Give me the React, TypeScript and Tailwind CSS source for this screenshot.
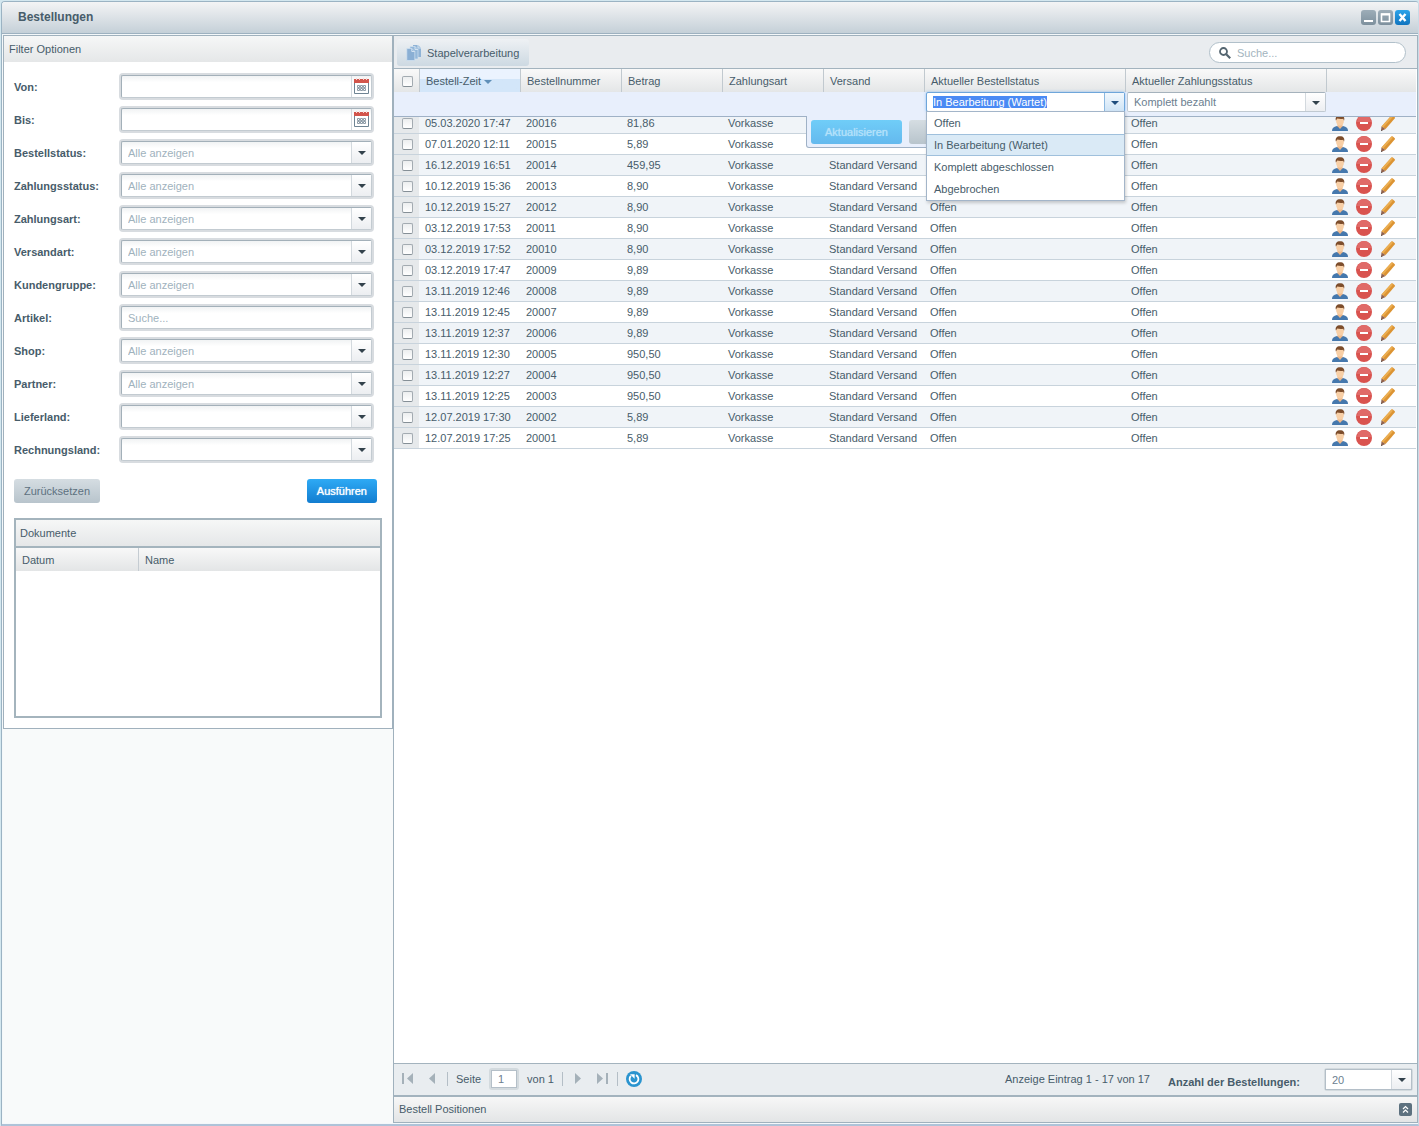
import { useEffect, useRef, type ReactNode } from 'react'
import clsx from 'clsx'

const filters = [
  { id: 'von', label: 'Von:', type: 'date' },
  { id: 'bis', label: 'Bis:', type: 'date' },
  { id: 'bestellstatus', label: 'Bestellstatus:', type: 'combo', value: 'Alle anzeigen' },
  { id: 'zahlungsstatus', label: 'Zahlungsstatus:', type: 'combo', value: 'Alle anzeigen' },
  { id: 'zahlungsart', label: 'Zahlungsart:', type: 'combo', value: 'Alle anzeigen' },
  { id: 'versandart', label: 'Versandart:', type: 'combo', value: 'Alle anzeigen' },
  { id: 'kundengruppe', label: 'Kundengruppe:', type: 'combo', value: 'Alle anzeigen' },
  { id: 'artikel', label: 'Artikel:', type: 'text' },
  { id: 'shop', label: 'Shop:', type: 'combo', value: 'Alle anzeigen' },
  { id: 'partner', label: 'Partner:', type: 'combo', value: 'Alle anzeigen' },
  { id: 'lieferland', label: 'Lieferland:', type: 'combo', value: '' },
  { id: 'rechnungsland', label: 'Rechnungsland:', type: 'combo', value: '' },
]

const orders = [
  { time: '05.03.2020 17:47', number: '20016', amount: '81,86', shipping: '', status: '' },
  { time: '07.01.2020 12:11', number: '20015', amount: '5,89', shipping: '', status: '' },
  { time: '16.12.2019 16:51', number: '20014', amount: '459,95', shipping: 'Standard Versand', status: '' },
  { time: '10.12.2019 15:36', number: '20013', amount: '8,90', shipping: 'Standard Versand', status: '' },
  { time: '10.12.2019 15:27', number: '20012', amount: '8,90', shipping: 'Standard Versand', status: 'Offen' },
  { time: '03.12.2019 17:53', number: '20011', amount: '8,90', shipping: 'Standard Versand', status: 'Offen' },
  { time: '03.12.2019 17:52', number: '20010', amount: '8,90', shipping: 'Standard Versand', status: 'Offen' },
  { time: '03.12.2019 17:47', number: '20009', amount: '9,89', shipping: 'Standard Versand', status: 'Offen' },
  { time: '13.11.2019 12:46', number: '20008', amount: '9,89', shipping: 'Standard Versand', status: 'Offen' },
  { time: '13.11.2019 12:45', number: '20007', amount: '9,89', shipping: 'Standard Versand', status: 'Offen' },
  { time: '13.11.2019 12:37', number: '20006', amount: '9,89', shipping: 'Standard Versand', status: 'Offen' },
  { time: '13.11.2019 12:30', number: '20005', amount: '950,50', shipping: 'Standard Versand', status: 'Offen' },
  { time: '13.11.2019 12:27', number: '20004', amount: '950,50', shipping: 'Standard Versand', status: 'Offen' },
  { time: '13.11.2019 12:25', number: '20003', amount: '950,50', shipping: 'Standard Versand', status: 'Offen' },
  { time: '12.07.2019 17:30', number: '20002', amount: '5,89', shipping: 'Standard Versand', status: 'Offen' },
  { time: '12.07.2019 17:25', number: '20001', amount: '5,89', shipping: 'Standard Versand', status: 'Offen' },
]

const statusOptions = ['Offen', 'In Bearbeitung (Wartet)', 'Komplett abgeschlossen', 'Abgebrochen']

function Arrow({ className }: { className?: string }) {
  return (
    <svg viewBox="0 0 8 4" className={clsx('h-1 w-2 fill-current', className)}>
      <path d="M0 0h8L4 4z" />
    </svg>
  )
}

function CalendarIcon() {
  return (
    <svg viewBox="0 0 15 16" className="h-4 w-[15px]">
      <path d="M.5 3.500h14v12H.5z" fill="#fff" stroke="#6f8493" />
      <path d="M0 1h15v4H0z" fill="#d2554c" />
      <path d="M2 0h1v2H2zM5 0h1v2H5zM9 0h1v2H9zM12 0h1v2h-1z" fill="#f6d9d6" />
      <path
        d="M3.500 7.500h2v2h-2zM6.500 7.500h2v2h-2zM9.500 7.500h2v2h-2zM3.500 10.500h2v2h-2zM6.500 10.500h2v2h-2zM9.500 10.500h2v2h-2z"
        fill="none"
        stroke="#8d9ba6"
      />
    </svg>
  )
}

function UserIcon() {
  return (
    <svg viewBox="0 0 16 16" className="size-4">
      <path d="M0 16c0-3 1.500-4.200 5-5h6c3.500.8 5 2 5 5z" fill="#4578ad" />
      <path d="M5.500 9h5v2.200L8 14l-2.500-2.800z" fill="#eeb98c" />
      <ellipse cx="8" cy="6" rx="3.900" ry="4.800" fill="#f8cfa6" />
      <path d="M3.900 5.600C3 2.200 4.800.2 8 .2c3.400 0 5 2 4.100 5.400-.6-.7-.5-1.300-.8-1.900-2 .4-4.200.3-6-.2-.6.700-.7 1.300-1.400 2.100z" fill="#7d4d2b" />
    </svg>
  )
}

function DeleteIcon() {
  return (
    <svg viewBox="0 0 16 16" className="size-4">
      <circle cx="8" cy="8" r="8" fill="#d9534f" />
      <path d="M1 7a7 7 0 0 1 14 0z" fill="#e06a68" />
      <rect x="4" y="7" width="8" height="2" fill="#fff" />
    </svg>
  )
}

function PencilIcon() {
  return (
    <svg viewBox="0 0 16 16" className="size-4">
      <path d="M11.400.6Q12 0 12.800.5L14.600 2q.7.700.1 1.400L5.600 14 1.500 11.600z" fill="#dc9433" />
      <path d="M11.400.6 13 1.700 3.200 12.600 1.500 11.600z" fill="#ebae52" />
      <path d="M1.500 11.600 5.600 14 1 16z" fill="#93634c" />
      <path d="M1.200 14.400 2.600 15.300 1 16z" fill="#4d4d4d" />
    </svg>
  )
}

function StackIcon() {
  return (
    <svg viewBox="0 0 16 16" className="size-4">
      <path d="M7 0h5l3 3v9H7z" fill="#8fb3d6" />
      <path d="M4 1.500h5l3 3V14H4z" fill="#94b8da" stroke="#d3e3f1" strokeWidth=".7" />
      <path d="M.8 3.500h5l3 3v9h-8z" fill="#8aafd4" stroke="#d3e3f1" strokeWidth=".7" />
      <path d="M5.800 3.500v3h3M9 1.500v3h3M12 0v3h3" fill="none" stroke="#d3e3f1" />
    </svg>
  )
}

function Field({ children }: { children: ReactNode }) {
  return (
    <div className="h-[27px] flex-1 rounded-[4px] bg-[#d8dce0] p-[2px]">
      <div className="flex h-full rounded-[2px] border border-[#c3cbd1] border-t-[#a3b0b9] border-l-[#a3b0b9] bg-white bg-linear-to-b from-[#f1f3f4] from-0% to-white to-30%">
        {children}
      </div>
    </div>
  )
}

function Combo({ id, label, value, muted }: { id: string; label?: string; value: string; muted?: boolean }) {
  return (
    <div className="relative flex min-w-0 flex-1">
      <select
        id={id}
        aria-label={label}
        className={clsx('min-w-0 flex-1 appearance-none bg-transparent pl-[6px] outline-none', muted ? 'text-[#9fb2bd]' : 'text-[#6c8090]')}
      >
        <option>{value}</option>
      </select>
      <span className="pointer-events-none absolute inset-y-0 right-0 flex w-5 items-center justify-center border-l border-[#d3d9de] bg-linear-to-b from-white to-[#eceef1] pt-px">
        <Arrow className="text-[#33424c]" />
      </span>
    </div>
  )
}

function FilterPanel() {
  return (
    <section className="border border-[#a0b1bd] bg-white">
      <h2 className="h-[26px] bg-linear-to-b from-[#f6f7f7] to-[#e5e7e8] px-[5px] leading-[26px]">Filter Optionen</h2>
      <form className="px-[10px] pt-[11px] pb-[10px]">
        <div className="flex flex-col gap-[6px] pr-2">
          {filters.map((f) => (
            <div key={f.id} className="flex items-center">
              <label htmlFor={f.id} className="w-[105px] font-bold">
                {f.label}
              </label>
              <Field>
                {f.type === 'date' && (
                  <>
                    <input id={f.id} className="min-w-0 flex-1 px-[6px] outline-none" />
                    <button type="button" aria-label="Kalender" className="flex w-5 items-start justify-center border-l border-[#d3d9de] pt-[2px]">
                      <CalendarIcon />
                    </button>
                  </>
                )}
                {f.type === 'text' && (
                  <input id={f.id} placeholder="Suche..." className="min-w-0 flex-1 px-[6px] outline-none placeholder:text-[#9fb2bd]" />
                )}
                {f.type === 'combo' && <Combo id={f.id} value={f.value ?? ''} muted />}
              </Field>
            </div>
          ))}
        </div>
        <div className="mt-4 flex justify-between pr-[5px]">
          <button type="reset" className="h-6 rounded-[3px] bg-linear-to-b from-[#d5dde2] to-[#b8c4cc] px-[10px] text-[#5d717f]">
            Zurücksetzen
          </button>
          <button
            type="button"
            className="h-6 rounded-[3px] bg-linear-to-b from-[#2eaaf5] to-[#127dd0] px-[10px] text-white [text-shadow:0_0_1px_#fff]"
          >
            Ausführen
          </button>
        </div>
        <div className="mt-[15px] flex h-[200px] flex-col border-2 border-[#a4b4bd]">
          <h3 className="h-7 border-b-2 border-[#a4b4bd] bg-linear-to-b from-[#f6f7f7] to-[#e5e7e8] pl-1 leading-[26px]">Dokumente</h3>
          <table className="w-full table-fixed border-separate border-spacing-0 text-left">
            <thead>
              <tr className="h-[23px] bg-linear-to-b from-[#f8f8f8] to-[#e3e5e6]">
                <th className="w-[123px] border-r border-[#c5ccd2] pl-[6px] font-normal">Datum</th>
                <th className="pl-[6px] font-normal">Name</th>
              </tr>
            </thead>
          </table>
        </div>
      </form>
    </section>
  )
}

function RowEditor() {
  const input = useRef<HTMLInputElement>(null)

  useEffect(() => {
    input.current?.focus()
    input.current?.select()
  }, [])

  return (
    <div className="absolute inset-x-0 top-0 z-10 flex h-[25px] items-start border-b border-[#9fb1c6] bg-[#e8effc] pl-[532px]">
      {/* save / cancel tab hanging below the edited row */}
      <div className="absolute top-6 left-[412px] flex h-8 w-[198px] gap-[7px] rounded-b-[3px] border border-t-0 border-[#9fb1c6] bg-[#e8effc] px-1 pt-1">
        <button
          disabled
          className="h-6 w-[91px] rounded-[3px] bg-linear-to-b from-[#70cdf8] to-[#64b9ee] text-[#b4e1fa] [text-shadow:0_0_1px_#b4e1fa]"
        >
          Aktualisieren
        </button>
        <button aria-label="Abbrechen" className="h-6 flex-1 rounded-[3px] bg-linear-to-b from-[#d5dde2] to-[#b8c4cc]" />
      </div>

      <div className="relative flex h-5 w-[199px] rounded-[2px] border border-[#6ea6da] bg-white shadow-[0_0_3px_#8ebcf0]">
        <input
          ref={input}
          aria-label="Aktueller Bestellstatus"
          defaultValue="In Bearbeitung (Wartet)"
          className="min-w-0 flex-1 pl-[6px] leading-3 outline-none [text-shadow:0_0_1px_#fff] selection:bg-[#4a8af4] selection:text-white"
        />
        <button aria-label="Auswahl öffnen" className="flex w-5 items-center justify-center border-l border-[#8db9e0] bg-linear-to-b from-[#f2f8fd] to-[#cfe4f6] pt-px">
          <Arrow className="text-[#1f4d7d]" />
        </button>
        <ul role="listbox" className="absolute top-[18px] -right-px -left-px border border-[#a3b5c9] bg-white shadow-[1px_2px_3px_#00000030]">
          {statusOptions.map((option, i) => (
            <li
              key={option}
              role="option"
              aria-selected={i === 1}
              className={clsx('h-[22px] border-y px-[7px] leading-5', i === 1 ? 'border-[#9fc0dc] bg-[#daeaf6]' : 'border-transparent')}
            >
              {option}
            </li>
          ))}
        </ul>
      </div>
      <div className="ml-[2px] flex h-5 w-[199px] rounded-[2px] border border-[#c0c9d1] border-t-[#a5b2bc] bg-white">
        <Combo id="edit-zahlungsstatus" label="Aktueller Zahlungsstatus" value="Komplett bezahlt" />
      </div>
    </div>
  )
}

function Check({ label }: { label: string }) {
  return (
    <input
      type="checkbox"
      aria-label={label}
      className="mt-px ml-2 block size-[11px] appearance-none rounded-[2px] border border-[#a3abb1] border-b-[#858f96] bg-linear-to-b from-[#eceeef] to-white"
    />
  )
}

function OrderGrid() {
  const th = 'border-l border-[#c1c9cf] pl-[6px] font-normal'
  const td = 'border-b border-[#c8d3dc] pb-px pl-[6px]'
  return (
    <table className="w-full table-fixed border-separate border-spacing-0 text-left whitespace-nowrap">
      <colgroup>
        <col className="w-[25px]" />
        <col className="w-[101px]" />
        <col className="w-[101px]" />
        <col className="w-[101px]" />
        <col className="w-[101px]" />
        <col className="w-[101px]" />
        <col className="w-[201px]" />
        <col className="w-[201px]" />
        <col />
      </colgroup>
      <thead>
        <tr className="h-[23px] bg-linear-to-b from-[#f9f9f9] to-[#e4e6e7]">
          <th>
            <Check label="Alle auswählen" />
          </th>
          <th className={clsx(th, 'bg-linear-to-b from-[#ebf3fe] from-45% to-[#d3e6f9] to-45%')}>
            Bestell-Zeit <Arrow className="inline text-[#5f8fb8]" />
          </th>
          <th className={th}>Bestellnummer</th>
          <th className={th}>Betrag</th>
          <th className={th}>Zahlungsart</th>
          <th className={th}>Versand</th>
          <th className={th}>Aktueller Bestellstatus</th>
          <th className={th}>Aktueller Zahlungsstatus</th>
          <th className={th} aria-label="Aktionen" />
        </tr>
      </thead>
      <tbody>
        <tr className="h-[21px]">
          <td colSpan={9} className="relative">
            <RowEditor />
          </td>
        </tr>
        {orders.map((order) => (
          <tr key={order.number} className="h-[21px] odd:bg-white even:bg-[#f0f4f8]">
            <td className="border-b border-[#c8d3dc] bg-[#e6e9eb]">
              <Check label={order.number} />
            </td>
            <td className={td}>{order.time}</td>
            <td className={td}>{order.number}</td>
            <td className={td}>{order.amount}</td>
            <td className={td}>Vorkasse</td>
            <td className={td}>{order.shipping}</td>
            <td className={td}>{order.status}</td>
            <td className={td}>Offen</td>
            <td className="border-b border-[#c8d3dc]">
              <div className="flex h-5 items-center gap-2 pl-[6px]">
                <button aria-label="Kunde öffnen">
                  <UserIcon />
                </button>
                <button aria-label="Löschen">
                  <DeleteIcon />
                </button>
                <button aria-label="Bearbeiten">
                  <PencilIcon />
                </button>
              </div>
            </td>
          </tr>
        ))}
      </tbody>
    </table>
  )
}

function Pager() {
  const icon = 'h-[11px] w-3 fill-[#a5b1b9]'
  const divider = <span className="h-[14px] w-px bg-[#b4bec6]" />
  return (
    <div className="flex h-[34px] items-center border-t border-b-2 border-[#a3b3be] bg-[#e9edf0] pr-1 pl-2">
      <div className="flex items-center pb-[2px]">
        <button aria-label="Erste Seite" className="mr-3">
          <svg viewBox="0 0 12 11" className={icon}>
            <path d="M0 0h2v11H0zM11 0v11L5 5.500z" />
          </svg>
        </button>
        <button aria-label="Vorherige Seite" className="mr-[9px]">
          <svg viewBox="0 0 12 11" className={icon}>
            <path d="M9 0v11L3 5.500z" />
          </svg>
        </button>
        {divider}
        <label htmlFor="page" className="mr-2 ml-2">
          Seite
        </label>
        <div className="h-[22px] w-[30px] rounded-[3px] bg-[#d3dade] p-[2px]">
          <input
            id="page"
            defaultValue="1"
            className="block h-full w-full border border-[#b4bfc8] bg-white pl-[6px] text-[#6c8090] outline-none"
          />
        </div>
        <span className="mr-2 ml-2">von 1</span>
        {divider}
        <button aria-label="Nächste Seite" className="ml-[9px]">
          <svg viewBox="0 0 12 11" className={icon}>
            <path d="M3 0v11l6-5.500z" />
          </svg>
        </button>
        <button aria-label="Letzte Seite" className="mr-[9px] ml-3">
          <svg viewBox="0 0 12 11" className={icon}>
            <path d="M1 0v11l6-5.500zM10 0h2v11h-2z" />
          </svg>
        </button>
        {divider}
        <button aria-label="Aktualisieren" className="ml-2">
          <svg viewBox="0 0 16 16" className="size-4" fill="none">
            <circle cx="8" cy="8" r="8" fill="#2a94cf" />
            <path d="M4.900 4.900A4.400 4.400 0 1 0 10 4.100" stroke="#fff" strokeWidth="1.800" />
            <path d="M4 3.200h4.600v4.600z" fill="#fff" />
          </svg>
        </button>
      </div>
      <div className="ml-auto flex items-center">
        <span className="pb-[2px]">Anzeige Eintrag 1 - 17 von 17</span>
        <label htmlFor="page-size" className="mr-6 ml-[18px] pt-1 font-bold">
          Anzahl der Bestellungen:
        </label>
        <div className="flex h-[23px] w-[89px] rounded-[3px] bg-[#d3dade] p-px">
          <div className="flex flex-1 border border-[#b4bfc8] bg-white">
            <Combo id="page-size" value="20" />
          </div>
        </div>
      </div>
    </div>
  )
}

export default function App() {
  return (
    <div className="flex h-screen flex-col bg-[#d3e7ef] pt-px pl-px font-['Liberation_Sans',Arial,sans-serif] text-[11px] leading-[14px] text-[#475c6a]">
      <div className="flex min-h-0 flex-1 flex-col rounded-t-[4px] border border-b-2 border-[#9bb3c3] border-r-[#c9dbe6] border-b-[#aec3d8] bg-[#f4f8fa]">
        <header className="flex h-8 shrink-0 items-center rounded-t-[3px] border-b border-[#9db1c0] bg-linear-to-b from-[#f3f4f5] to-[#c5d0d8] pr-2 pb-px pl-4">
          <h1 className="flex-1 text-[12px] font-bold">Bestellungen</h1>
          <div className="flex gap-[2px]">
            <button aria-label="Minimieren" className="size-[15px] rounded-[3px] bg-linear-to-b from-[#9dadb8] to-[#7d909d]">
              <svg viewBox="0 0 15 15">
                <path d="M3 10h9v2H3z" fill="#fff" />
              </svg>
            </button>
            <button aria-label="Maximieren" className="size-[15px] rounded-[3px] bg-linear-to-b from-[#9dadb8] to-[#7d909d]">
              <svg viewBox="0 0 15 15">
                <path d="M3.500 4h8v7.500h-8z" fill="none" stroke="#fff" strokeWidth="1.600" />
                <path d="M3 3.500h9v2H3z" fill="#fff" />
              </svg>
            </button>
            <button aria-label="Schließen" className="size-[15px] rounded-[3px] bg-linear-to-b from-[#2ca4ea] to-[#0f74bf]">
              <svg viewBox="0 0 15 15">
                <path d="m4.500 4 6 7m0-7-6 7" stroke="#fff" strokeWidth="2.400" />
              </svg>
            </button>
          </div>
        </header>

        <div className="flex min-h-0 flex-1 py-px pl-px">
          <aside className="w-[390px] shrink-0 bg-[#f8fafa]">
            <FilterPanel />
          </aside>

          <main className="flex min-w-0 flex-1 flex-col border border-[#a0b1bd] bg-white">
            <div className="flex h-[33px] shrink-0 items-center justify-between border-b border-[#a3b3be] bg-[#e9ecef] pt-px pr-[11px] pl-[3px]">
              <button className="flex h-[27px] items-center gap-[5px] rounded-[3px] bg-linear-to-b from-[#eef1f4] to-[#cdd9e2] pr-[10px] pl-[9px]">
                <StackIcon />
                Stapelverarbeitung
              </button>
              <label className="flex h-[21px] w-[197px] items-center gap-[6px] rounded-full border border-[#b1c0ca] bg-white pl-[9px]">
                <svg viewBox="0 0 12 12" className="size-3" fill="none" stroke="#546570">
                  <circle cx="4.500" cy="4.500" r="3.500" strokeWidth="1.800" />
                  <path d="m7.200 7.200 4 4" strokeWidth="2.200" />
                </svg>
                <input aria-label="Suche" placeholder="Suche..." className="min-w-0 flex-1 outline-none placeholder:text-[#a3b4be]" />
              </label>
            </div>

            <div className="min-h-0 flex-1 overflow-hidden pr-px">
              <OrderGrid />
            </div>

            <Pager />
            <div className="flex h-[25px] shrink-0 items-center justify-between bg-linear-to-b from-[#f7f7f7] to-[#e3e5e6] pr-[5px] pb-px pl-[5px]">
              <h2>Bestell Positionen</h2>
              <button aria-label="Ausklappen" className="size-[13px] rounded-[2px] bg-[#5d717f]">
                <svg viewBox="0 0 13 13" fill="none" stroke="#fff">
                  <path d="m4 6 2.500-2.500L9 6M4 9.500 6.500 7 9 9.500" strokeWidth="1.200" />
                </svg>
              </button>
            </div>
          </main>
        </div>
      </div>
    </div>
  )
}
